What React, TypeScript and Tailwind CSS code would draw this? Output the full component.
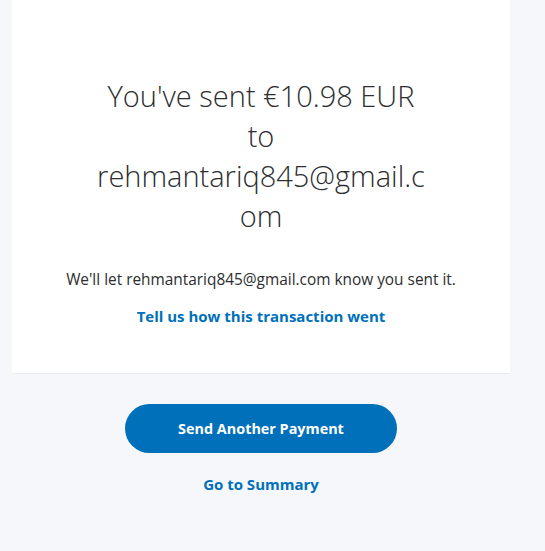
export default function App() {
  return (
    <div className="min-h-[551px] w-full bg-[#f5f7fa] pl-3 font-['Open_Sans',sans-serif]">
      <div className="flex w-[498px] flex-col items-center border-b border-[#eaeced] bg-white pb-[46px] pt-[76px]">
        <h1 className="w-[334px] break-words text-center text-[29px] font-light leading-[40px] text-[#2c2e2f]">
          You've sent €10.98 EUR to rehmantariq845@gmail.com
        </h1>
        <p className="mt-[33px] text-[15.4px] leading-[22px] text-[#2c2e2f]">
          We'll let rehmantariq845@gmail.com know you sent it.
        </p>
        <a href="#" className="mt-[14px] text-[15px] font-bold leading-[22px] text-[#0070ba]">
          Tell us how this transaction went
        </a>
      </div>
      <div className="flex w-[498px] flex-col items-center pt-[30px]">
        <button className="h-[49px] w-[272px] rounded-full bg-[#0070ba] text-[14.4px] font-bold text-white">
          Send Another Payment
        </button>
        <a href="#" className="mt-[20px] text-[15px] font-bold leading-[22px] text-[#0070ba]">
          Go to Summary
        </a>
      </div>
    </div>
  );
}
